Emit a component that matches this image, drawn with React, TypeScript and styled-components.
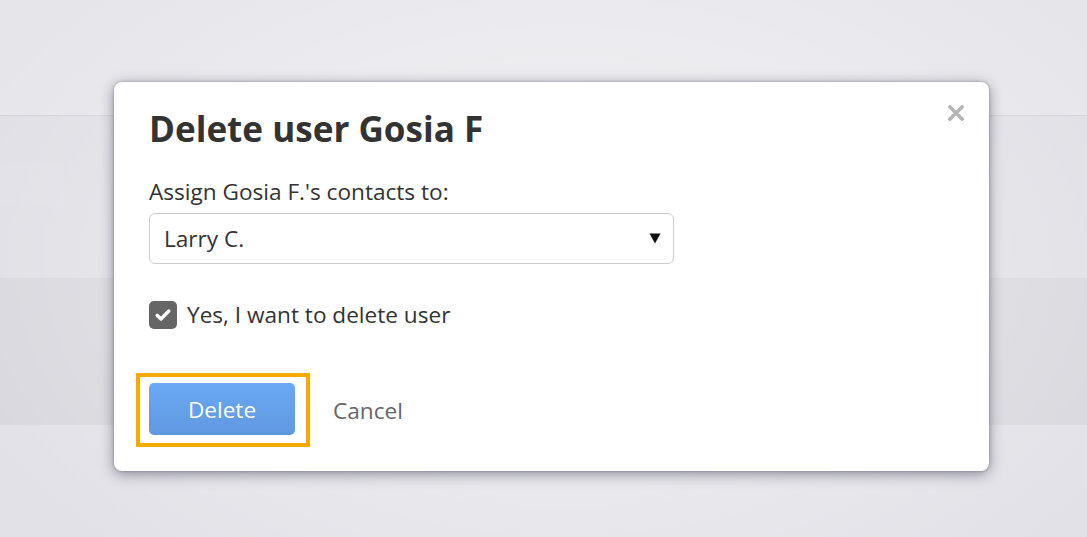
import React from "react";
import styled, { createGlobalStyle } from "styled-components";

const Global = createGlobalStyle`
  html, body { margin: 0; padding: 0; }
  body {
    width: 1087px;
    height: 537px;
    overflow: hidden;
    font-family: "Open Sans", "Liberation Sans", sans-serif;
    background: #e3e2e8;
  }
  * { box-sizing: border-box; }
`;

const Page = styled.div`
  position: relative;
  width: 1087px;
  height: 537px;
  display: flex;
  flex-direction: column;
  overflow: hidden;
`;

const PageHeader = styled.div`
  height: 116px;
  flex: none;
  background: #e6e5ea;
  border-bottom: 1px solid #d2d1d8;
`;

const PageSection = styled.div`
  height: 162px;
  flex: none;
  background: #e0dfe5;
  padding-top: 47px;
`;

const FaintBox = styled.div`
  width: 64px;
  height: 43px;
  background: #e1e0e6;
`;

const PageBand = styled.div`
  height: 147px;
  flex: none;
  background: #d8d7dd;
`;

const PageFooter = styled.div`
  flex: 1;
  background: #e2e1e7;
`;

const Overlay = styled.div`
  position: absolute;
  inset: 0;
  background: radial-gradient(
    ellipse 60% 75% at 52% 50%,
    rgba(255, 255, 255, 0.5) 0%,
    rgba(255, 255, 255, 0.25) 55%,
    rgba(255, 255, 255, 0) 100%
  );
  padding: 82px 0 0 114px;
`;

const Modal = styled.div`
  position: relative;
  width: 875px;
  height: 389px;
  background: #ffffff;
  border-radius: 8px;
  box-shadow: 0 0 3px rgba(60, 58, 80, 0.4), 0 3px 14px rgba(50, 48, 70, 0.5);
  padding: 25px 35px 24px 35px;
  display: flex;
  flex-direction: column;
  color: #333333;
`;

const CloseButton = styled.button`
  position: absolute;
  top: 23px;
  right: 25px;
  width: 16px;
  height: 16px;
  padding: 0;
  border: none;
  background: transparent;
  display: flex;
  cursor: pointer;
`;

const Title = styled.h2`
  margin: 0;
  font-size: 35.1px;
  line-height: 42px;
  font-weight: 700;
  color: #333333;
`;

const Label = styled.label`
  margin-top: 26px;
  font-size: 22.6px;
  line-height: 33.6px;
  color: #333333;
`;

const SelectBox = styled.div`
  margin-top: 4px;
  width: 525px;
  height: 52px;
  border: 1px solid #cccccc;
  border-radius: 6px;
  display: flex;
  align-items: center;
  justify-content: space-between;
  padding: 0 12px 0 14px;
  font-size: 22.6px;
  color: #333333;
`;

const CheckRow = styled.label`
  margin-top: 34px;
  display: flex;
  align-items: center;
  gap: 10px;
  font-size: 22.6px;
  line-height: 33.6px;
  color: #333333;
`;

const CheckBox = styled.span`
  width: 28px;
  height: 28px;
  border-radius: 5px;
  background: #666666;
  display: flex;
  align-items: center;
  justify-content: center;
`;

const Actions = styled.div`
  margin-top: 41px;
  display: flex;
  align-items: center;
  gap: 23px;
`;

const FocusRing = styled.div`
  margin-left: -13px;
  border: 4px solid #f6aa00;
  padding: 6px 11px 8px 9px;
  display: flex;
`;

const PrimaryButton = styled.button`
  width: 146px;
  height: 52px;
  border: none;
  border-radius: 5px;
  background: linear-gradient(#6ba9f5, #5f98df);
  color: #ffffff;
  font-family: inherit;
  font-size: 22.6px;
  cursor: pointer;
`;

const LinkButton = styled.button`
  border: none;
  background: transparent;
  padding: 0;
  font-family: inherit;
  font-size: 22.6px;
  color: #666666;
  cursor: pointer;
`;

export default function App() {
  return (
    <>
      <Global />
      <Page>
        <PageHeader />
        <PageSection>
          <FaintBox />
        </PageSection>
        <PageBand />
        <PageFooter />
        <Overlay>
          <Modal>
            <CloseButton aria-label="Close">
              <svg width="16" height="16" viewBox="0 0 16 16">
                <path d="M2 2 L14 14 M14 2 L2 14" stroke="#b5b5b5" strokeWidth="3.6" strokeLinecap="square" />
              </svg>
            </CloseButton>
            <Title>Delete user Gosia F</Title>
            <Label>Assign Gosia F.'s contacts to:</Label>
            <SelectBox>
              <span>Larry C.</span>
              <svg width="12" height="11" viewBox="0 0 12 11">
                <path d="M0.5 0.5 L11.5 0.5 L6 10.5 Z" fill="#111111" />
              </svg>
            </SelectBox>
            <CheckRow>
              <CheckBox>
                <svg width="18" height="18" viewBox="0 0 18 18">
                  <path d="M3.2 9.4 L7 13 L14.8 5" fill="none" stroke="#ffffff" strokeWidth="3.4" strokeLinecap="round" strokeLinejoin="round" />
                </svg>
              </CheckBox>
              Yes, I want to delete user
            </CheckRow>
            <Actions>
              <FocusRing>
                <PrimaryButton>Delete</PrimaryButton>
              </FocusRing>
              <LinkButton>Cancel</LinkButton>
            </Actions>
          </Modal>
        </Overlay>
      </Page>
    </>
  );
}
